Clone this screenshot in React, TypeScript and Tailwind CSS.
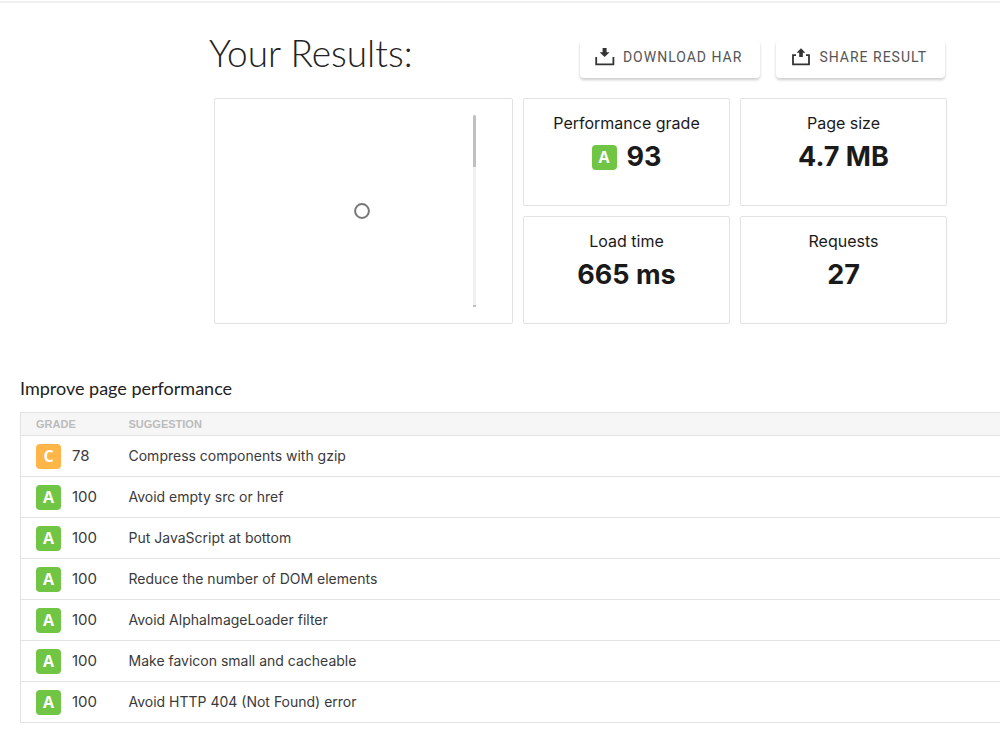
import type { ReactNode } from "react";

const suggestions = [
  { grade: "C", score: 78, text: "Compress components with gzip" },
  { grade: "A", score: 100, text: "Avoid empty src or href" },
  { grade: "A", score: 100, text: "Put JavaScript at bottom" },
  { grade: "A", score: 100, text: "Reduce the number of DOM elements" },
  { grade: "A", score: 100, text: "Avoid AlphaImageLoader filter" },
  { grade: "A", score: 100, text: "Make favicon small and cacheable" },
  { grade: "A", score: 100, text: "Avoid HTTP 404 (Not Found) error" },
];

function GradeBadge({ grade }: { grade: string }) {
  return (
    <span
      className={`flex h-[25px] w-[25px] shrink-0 items-center justify-center rounded font-['Open_Sans',sans-serif] text-base leading-6 font-bold text-white ${
        grade === "A" ? "bg-[#70c544]" : "bg-[#ffb547]"
      }`}
    >
      {grade}
    </span>
  );
}

function ActionButton({ icon, children }: { icon: ReactNode; children: ReactNode }) {
  return (
    <button
      type="button"
      className="flex h-[38px] items-center gap-2 rounded bg-white pr-[18px] pb-1 pl-[15px] font-['Roboto',sans-serif] text-sm tracking-[1px] text-[#555] shadow-[0_2px_3px_rgba(0,0,0,0.2)]"
    >
      {icon}
      {children}
    </button>
  );
}

function Stat({ label, children }: { label: string; children: ReactNode }) {
  return (
    <div className="flex h-[108px] flex-col items-center gap-1 rounded-xs border border-[#e2e2e2] pt-3 text-[#1a1a1a]">
      <h2 className="text-base leading-6">{label}</h2>
      <div className="flex items-center gap-[10px] text-[27px] leading-9 font-bold">{children}</div>
    </div>
  );
}

export default function App() {
  return (
    <main className="bg-white pt-px font-['Inter',sans-serif]">
      <div className="border-t-2 border-[#f0f0f0]" />

      {/* Title and actions */}
      <header className="flex items-start justify-between pt-[26px] pr-[55px] pl-[209px]">
        <h1 className="font-['Lato',sans-serif] text-[37px] leading-[48px] font-light text-[#222]">
          Your Results:
        </h1>
        <div className="flex gap-4 pt-[11px]">
          <ActionButton
            icon={
              <svg width="20" height="18" viewBox="0 0 20 18" fill="none" aria-hidden="true">
                <path d="M1.2 9v7.4h17.2V9" stroke="#333" strokeWidth="1.8" />
                <path d="M7.6 0h4v4.2h3L9.6 9 4.6 4.2h3z" fill="#333" />
              </svg>
            }
          >
            DOWNLOAD HAR
          </ActionButton>
          <ActionButton
            icon={
              <svg width="20" height="18" viewBox="0 0 20 18" fill="none" aria-hidden="true">
                <path d="M5 7.2H2v9.2h16V7.2h-3" stroke="#333" strokeWidth="1.8" />
                <path d="M8.2 9V4.8H5.6L10 .2l4.4 4.6h-2.6V9z" fill="#333" />
              </svg>
            }
          >
            SHARE RESULT
          </ActionButton>
        </div>
      </header>

      {/* Summary */}
      <section className="grid grid-cols-[299px_1fr_1fr] gap-[10px] pt-5 pr-[53px] pl-[214px]">
        <div className="row-span-2 flex justify-end rounded-xs border border-[#e2e2e2] py-4 pr-9">
          <div className="mr-[103px] flex items-center">
            <svg width="16" height="16" viewBox="0 0 16 16" fill="none" aria-hidden="true">
              <circle cx="8" cy="8" r="6.9" stroke="#777" strokeWidth="2" />
            </svg>
          </div>
          <div className="flex w-[3px] flex-col justify-between bg-[#f0f0f0]">
            <div className="h-[52px] rounded-t-full bg-[#c0c0c0]" />
            <div className="h-[2px] bg-[#c0c0c0]" />
          </div>
        </div>
        <Stat label="Performance grade">
          <GradeBadge grade="A" />
          93
        </Stat>
        <Stat label="Page size">4.7 MB</Stat>
        <Stat label="Load time">665 ms</Stat>
        <Stat label="Requests">27</Stat>
      </section>

      {/* Suggestions */}
      <section className="pt-[50px] pl-5">
        <h2 className="pb-[10px] font-['Lato',sans-serif] text-lg leading-7 text-[#222]">
          Improve page performance
        </h2>
        <table className="w-full border-collapse border-y border-l border-[#e2e2e2] text-left">
          <thead>
            <tr className="h-[23px] bg-[#f6f6f6] font-['Liberation_Sans',sans-serif] text-[11px] leading-4 text-[#bbb]">
              <th className="w-[108px] pl-[15px] font-bold">GRADE</th>
              <th className="font-bold">SUGGESTION</th>
            </tr>
          </thead>
          <tbody className="text-sm leading-5 text-[#3a3a3a]">
            {suggestions.map((item) => (
              <tr key={item.text} className="h-[41px] border-t border-[#e2e2e2]">
                <td className="pl-[15px]">
                  <div className="flex items-center gap-[11px]">
                    <GradeBadge grade={item.grade} />
                    <span className="text-[15px]">{item.score}</span>
                  </div>
                </td>
                <td>{item.text}</td>
              </tr>
            ))}
          </tbody>
        </table>
      </section>
    </main>
  );
}
